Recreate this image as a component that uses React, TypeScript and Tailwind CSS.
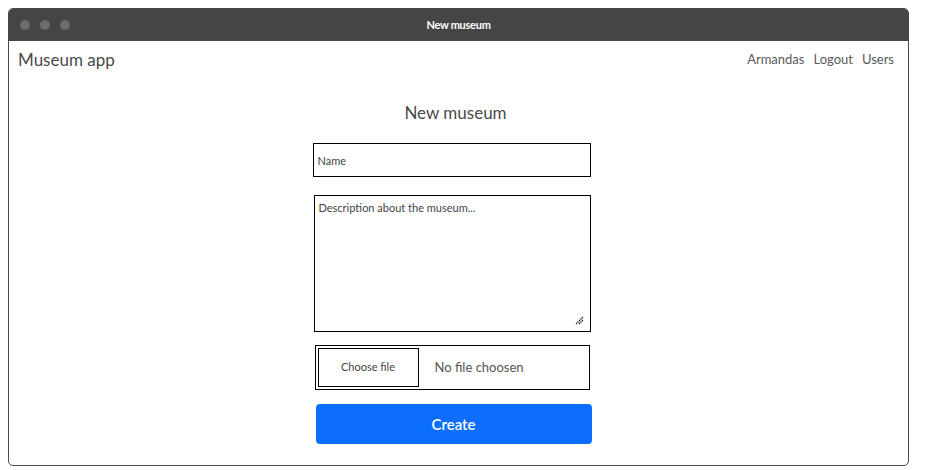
import React from "react";

export default function App() {
  return (
    <div className="w-[925px] h-[470px] bg-white p-[8px] pr-[16px] pb-[4px]" style={{ fontFamily: "Lato, 'Noto Sans', sans-serif" }}>
      <div className="w-[901px] h-[458px] flex flex-col rounded-[5px] border border-[#4a4a4a] overflow-hidden">
        {/* title bar */}
        <div className="h-[32px] bg-[#454545] flex items-center relative shrink-0">
          <div className="flex gap-[10px] pl-[11px]">
            <span className="w-[10px] h-[10px] rounded-full bg-[#6c6c6c]" />
            <span className="w-[10px] h-[10px] rounded-full bg-[#6c6c6c]" />
            <span className="w-[10px] h-[10px] rounded-full bg-[#6c6c6c]" />
          </div>
          <div className="absolute inset-0 flex items-center justify-center text-white text-[11px] font-bold tracking-tight">
            New museum
          </div>
        </div>

        {/* navbar */}
        <div className="flex items-center justify-between h-[38px] pl-[9px] pr-[14px] text-[#4a4a4a]">
          <span className="text-[17px]">Museum app</span>
          <div className="flex gap-[9px] text-[13px] text-[#5a5a5a]">
            <span>Armandas</span>
            <span>Logout</span>
            <span>Users</span>
          </div>
        </div>

        {/* form */}
        <div className="flex flex-col items-center pr-[14px]">
          <h1 className="text-[17px] text-[#4a4a4a] mt-[22px] leading-[24px] pl-[8px]">New museum</h1>
          <div className="w-[278px] flex flex-col mt-[18px]">
            <input
              placeholder="Name"
              className="h-[34px] border border-black px-[4px] text-[11px] placeholder:text-[#444] outline-none"
            />
            <div className="relative mt-[18px] ml-[1px]">
              <textarea
                placeholder="Description about the museum..."
                className="block w-full h-[137px] resize-none border border-black px-[4px] py-[4px] text-[11px] placeholder:text-[#444] outline-none"
              />
              <svg className="absolute right-[7px] bottom-[7px]" width="9" height="9" viewBox="0 0 9 9">
                <path d="M1 8 L8 1 M4 8 L8 4" stroke="#222" strokeWidth="1.2" strokeDasharray="1.5 0.6" />
              </svg>
            </div>
            <div className="h-[45px] mt-[13px] ml-[2px] mr-[1px] border border-black flex items-center p-[2px]">
              <div className="h-full w-[101px] border border-black flex items-center justify-center text-[11px] text-[#444]">
                Choose file
              </div>
              <span className="ml-[16px] text-[13px] text-[#555]">No file choosen</span>
            </div>
            <button className="h-[40px] mt-[14px] ml-[3px] mr-[-1px] rounded-[4px] bg-[#0d6efd] text-white text-[15px] font-semibold">
              Create
            </button>
          </div>
        </div>
      </div>
    </div>
  );
}
